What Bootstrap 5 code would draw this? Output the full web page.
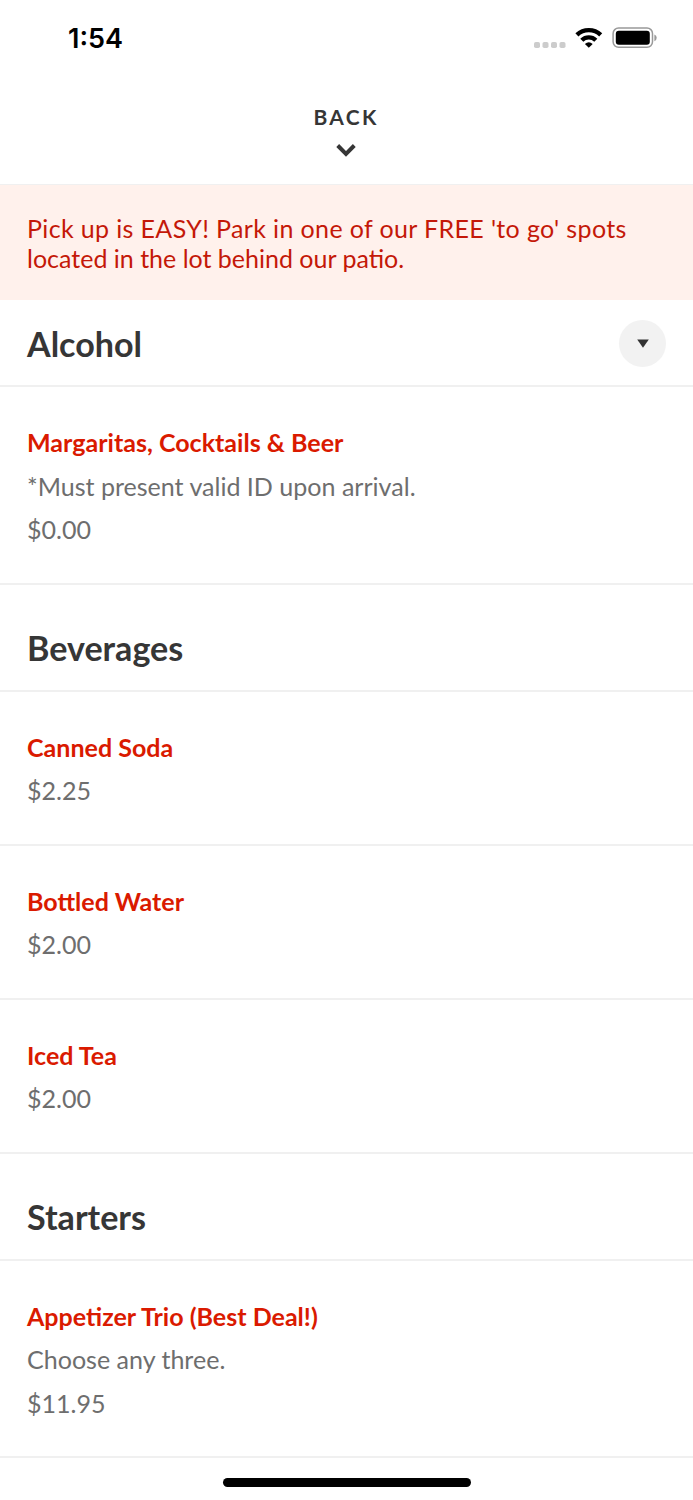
<!DOCTYPE html>
<html lang="en"><head><meta charset="utf-8"><meta name="viewport" content="width=device-width, initial-scale=1"><title>Menu</title>
<link href="https://cdn.jsdelivr.net/npm/bootstrap@5.3.0/dist/css/bootstrap.min.css" rel="stylesheet">
<style>
body{font-family:Lato,sans-serif;color:#363636;background:#fff;height:1500px;overflow:hidden}
.status{height:76px;padding:0 36px 0 68px}
.clock{font:600 27px/76px Inter,sans-serif;color:#000;padding-top:2px}
.topbar{height:109px;padding-top:29px;padding-right:1px;border-bottom:1.5px solid #f0f0f0;font-size:21px;font-weight:700;letter-spacing:2.3px;line-height:23px}
.topbar svg{margin-top:15px;margin-right:1px}
.notice{height:115px;padding:28px 27px;background:#fff1ec;color:#c41808;font-size:25px;line-height:30px}
.notice .lead-line{letter-spacing:.365px}
.section-head{border-bottom:2px solid #f0f0f0;padding:1px 27px 0;height:87px}
.section-head.later{height:107px;padding-top:21px}
.section-head h2{font-size:34.1px;font-weight:700;line-height:40px;margin:0}
.section-head:not(.later) h2{padding-top:1px}
.toggle{width:47px;height:47px;background:#f2f2f2;border:0;padding:0 0 0 1px}
.item{border-bottom:2px solid #f0f0f0;padding:34px 27px 31px;font-size:25.05px;line-height:43.5px;color:#6e6e6e}
.item h3{font-size:25.05px;font-weight:700;line-height:43.5px;color:#da1a00;margin:0}
.home{left:222.5px;top:1478px;width:248px;height:8.5px;background:#000}
</style></head><body class="position-relative">
<div class="status d-flex justify-content-between align-items-center"><span class="clock">1:54</span>
<svg width="124" height="24" viewBox="533 26 124 24" aria-label="Wi-Fi, battery full">
<g fill="#ccc"><rect x="534" y="42" width="6" height="6" rx="1.8"/><rect x="542.5" y="42" width="6" height="6" rx="1.8"/><rect x="551" y="42" width="6" height="6" rx="1.8"/><rect x="559.5" y="42" width="6" height="6" rx="1.8"/></g>
<g fill="none" stroke="#000" stroke-width="4.4"><path d="M576.9 34.9a17.2 17.2 0 0 1 23.8 0"/><path d="M581.8 40.2a10 10 0 0 1 14 0"/></g>
<path d="M588.8 47.8l-3.9-3.9q3.9-3.4 7.8 0z"/>
<rect x="613.1" y="28" width="39.4" height="19.3" rx="5.5" fill="none" stroke="#999" stroke-width="1.5"/>
<rect x="615.8" y="30.7" width="34" height="14" rx="3"/>
<path d="M654.4 34.4q2.3 1 2.3 3.4t-2.3 3.4z" fill="#999"/></svg></div>
<header class="topbar d-flex flex-column align-items-center"><span>BACK</span>
<svg width="20" height="14" viewBox="0 0 20 14"><path d="M1.7 2.5l8.3 8.3 8.3-8.3" fill="none" stroke="#363636" stroke-width="4"/></svg></header>
<div class="notice"><span class="lead-line">Pick up is EASY! Park in one of our FREE 'to go' spots</span> located in the lot behind our patio.</div>
<div class="section-head d-flex align-items-center justify-content-between"><h2>Alcohol</h2><button class="toggle rounded-circle d-flex align-items-center justify-content-center" aria-label="Sections"><svg width="12" height="9" viewBox="0 0 12 9"><path d="M.2.4h11.6L6 8.8z" fill="#333"/></svg></button></div>
<div class="item"><h3>Margaritas, Cocktails &amp; Beer</h3><div>*Must present valid ID upon arrival.</div><div>$0.00</div></div>
<div class="section-head later d-flex align-items-center"><h2>Beverages</h2></div>
<div class="item"><h3>Canned Soda</h3><div>$2.25</div></div>
<div class="item"><h3>Bottled Water</h3><div>$2.00</div></div>
<div class="item"><h3>Iced Tea</h3><div>$2.00</div></div>
<div class="section-head later d-flex align-items-center"><h2>Starters</h2></div>
<div class="item"><h3>Appetizer Trio (Best Deal!)</h3><div>Choose any three.</div><div>$11.95</div></div>
<div class="home position-absolute rounded-pill"></div>
<script src="https://cdn.jsdelivr.net/npm/bootstrap@5.3.0/dist/js/bootstrap.bundle.min.js"></script>
</body></html>
